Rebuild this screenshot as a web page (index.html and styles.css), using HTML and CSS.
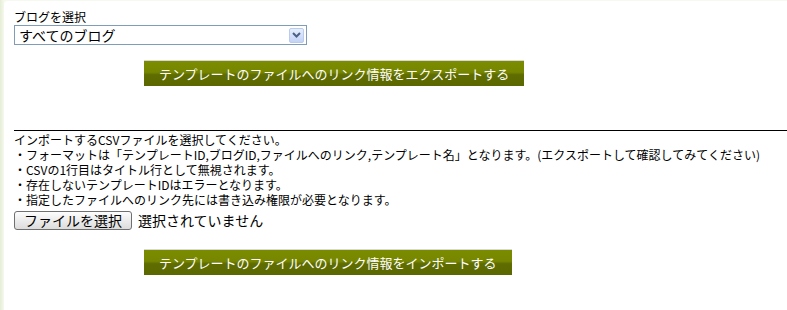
FILE: index.html
```html
<!DOCTYPE html>
<html lang="ja">
<head>
<meta charset="utf-8">
<title>テンプレートのリンク情報</title>
<link rel="stylesheet" href="styles.css">
</head>
<body>
<div class="panel">
  <div class="label">ブログを選択</div>
  <div class="selectbox">
    <select class="select">
      <option>すべてのブログ</option>
    </select>
    <span class="arrow"><svg width="9" height="6" viewBox="0 0 9 6"><path d="M1 1 L4.5 4.5 L8 1" fill="none" stroke="#4d6185" stroke-width="2"/></svg></span>
  </div>
  <div class="btnrow export">
    <button class="olive">テンプレートのファイルへのリンク情報をエクスポートする</button>
  </div>
  <hr class="rule">
  <div class="notes">
    <p>インポートするCSVファイルを選択してください。</p>
    <p>・フォーマットは「テンプレートID,ブログID,ファイルへのリンク,テンプレート名」となります。(エクスポートして確認してみてください)</p>
    <p>・CSVの1行目はタイトル行として無視されます。</p>
    <p>・存在しないテンプレートIDはエラーとなります。</p>
    <p>・指定したファイルへのリンク先には書き込み権限が必要となります。</p>
  </div>
  <div class="filerow">
    <button class="filebtn">ファイルを選択</button>
    <span class="nofile">選択されていません</span>
  </div>
  <div class="btnrow import">
    <button class="olive">テンプレートのファイルへのリンク情報をインポートする</button>
  </div>
</div>
</body>
</html>
```
FILE: styles.css
```css
html, body {
  margin: 0;
  padding: 0;
  height: 100%;
}
body {
  background: linear-gradient(to right, #e6eed6 0, #f1f5e8 3px, #f6f9ef 4px);
  font-family: "Noto Sans CJK JP", "Noto Sans", sans-serif;
  color: #000;
  overflow: hidden;
}
.panel {
  margin: 1px 0 0 4px;
  background: #fff;
  border-top-left-radius: 4px;
  min-height: 100%;
  padding: 8px 0 0 10px;
  box-sizing: border-box;
}
.label {
  font-size: 12px;
  line-height: 16px;
}
.selectbox {
  display: flex;
  align-items: center;
  width: 293px;
  height: 20px;
  box-sizing: border-box;
  border: 1px solid #7f9db9;
  background: #fff;
}
.select {
  appearance: none;
  -webkit-appearance: none;
  flex: 1;
  border: 0;
  background: transparent;
  font-family: inherit;
  font-size: 14px;
  line-height: 18px;
  height: 18px;
  padding: 0 0 0 4px;
  margin: 0;
  color: #000;
  outline: none;
}
.arrow {
  width: 15px;
  height: 15px;
  margin-right: 2px;
  box-sizing: border-box;
  border: 1px solid #b9cbef;
  border-radius: 2px;
  background: linear-gradient(#e6eefc, #c3d3f7);
  display: flex;
  align-items: center;
  justify-content: center;
}
.btnrow {
  padding-left: 130px;
}
.export {
  margin-top: 15px;
}
.olive {
  font-family: inherit;
  font-size: 13px;
  color: #fff;
  height: 26px;
  padding: 0 15px;
  border: 0;
  border-top: 1px solid #d8d8d8;
  background: linear-gradient(#7b8c00 0, #768600 45%, #5f6c00 55%, #5b6800 100%);
  cursor: pointer;
  display: block;
}
.rule {
  margin: 44px 0 0 0;
  border: 0;
  border-top: 1px solid #000;
  height: 0;
}
.notes {
  font-size: 12px;
  line-height: 15px;
  margin-top: 1px;
}
.notes p {
  margin: 0;
  white-space: nowrap;
}
.filerow {
  display: flex;
  align-items: center;
  gap: 6px;
  margin-top: 3px;
}
.filebtn {
  font-family: inherit;
  font-size: 14px;
  height: 19px;
  padding: 0 9px;
  border: 1px solid #707070;
  border-radius: 3px;
  background: linear-gradient(#fdfdfd, #ececec 50%, #dcdcdc);
  color: #000;
  line-height: 16px;
}
.nofile {
  font-size: 14px;
}
.import {
  margin-top: 19px;
}
```
